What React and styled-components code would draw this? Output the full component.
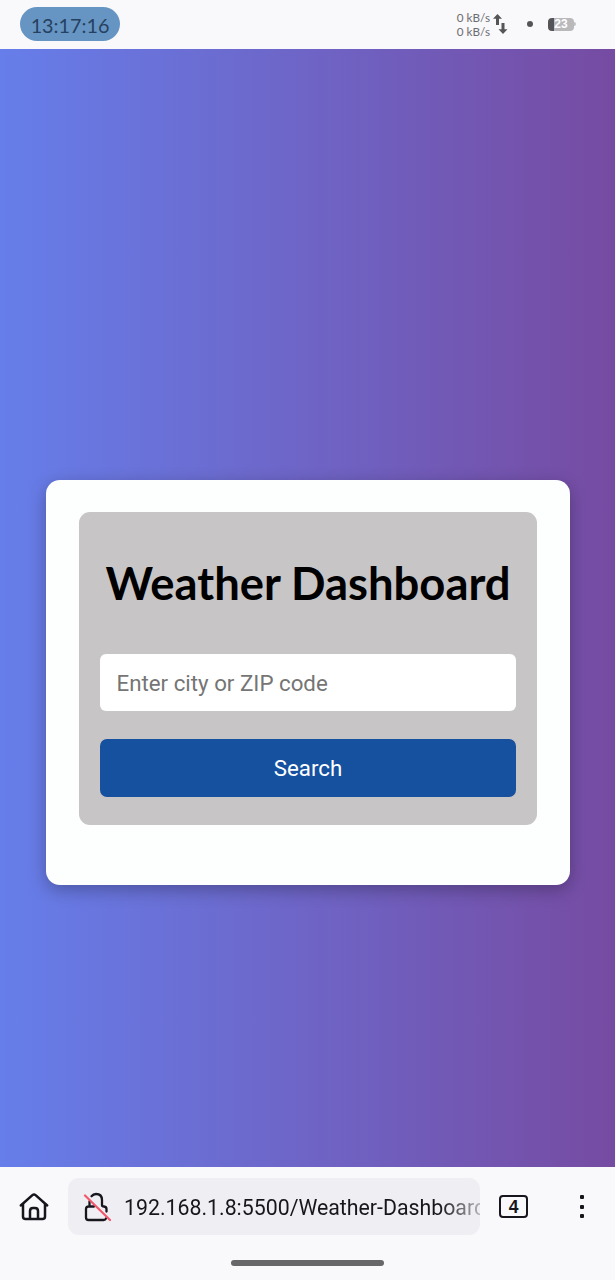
import React from 'react';
import styled, { createGlobalStyle } from 'styled-components';

const GlobalStyle = createGlobalStyle`
  * { box-sizing: border-box; }
  body { margin: 0; background: #f9f9fc; }
`;

const Phone = styled.div`
  width: 615px;
  height: 1280px;
  display: flex;
  flex-direction: column;
  overflow: hidden;
  background: #f9f9fc;
  font-family: Roboto, "Liberation Sans", sans-serif;
`;

const StatusBar = styled.header`
  height: 48px;
  margin-bottom: 1px;
  flex: none;
  display: flex;
  align-items: center;
  padding: 0 39px 0 20px;
  font-family: Lato, sans-serif;
`;

const Clock = styled.div`
  width: 100px;
  height: 34px;
  border-radius: 17px;
  background: #6695c3;
  color: #26415f;
  font-size: 19.8px;
  line-height: 37px;
  text-align: center;
  white-space: nowrap;
`;

const Speeds = styled.div`
  margin-left: auto;
  margin-right: 3px;
  color: #6c6c70;
  font-size: 11.7px;
  line-height: 14px;
  white-space: nowrap;
`;

const Dot = styled.span`
  width: 6px;
  height: 6px;
  border-radius: 50%;
  margin: 0 15px 0 19px;
  background: #555558;
`;

const Battery = styled.div`
  width: 26px;
  height: 13px;
  border-radius: 4px;
  background: linear-gradient(to right, #555558 6px, #b9b9bc 6px);
  color: #fff;
  font: bold 12px/13px "Liberation Sans", sans-serif;
  text-align: center;
`;

const BatteryTip = styled.span`
  width: 2px;
  height: 4px;
  border-radius: 0 2px 2px 0;
  background: #c2c2c5;
`;

const Page = styled.main`
  height: 1118px;
  flex: none;
  padding: 431px 45px 0 46px;
  background: linear-gradient(to right, #667eea, #764ba2);
`;

const Card = styled.section`
  height: 405px;
  padding: 32px 33px 60px;
  border-radius: 14px;
  background: #fdfefe;
  box-shadow: 0 5px 17px rgba(0, 0, 0, 0.28);
`;

const SearchPanel = styled.form`
  height: 313px;
  padding: 43px 21px 28px;
  display: flex;
  flex-direction: column;
  border-radius: 11px;
  background: #c8c5c6;
`;

const Title = styled.h1`
  margin: 0 0 43px;
  color: #000;
  font: bold 45.4px/56px Lato, sans-serif;
  text-align: center;
  white-space: nowrap;
`;

const CityInput = styled.input`
  width: 100%;
  height: 57px;
  flex: none;
  margin: 0 0 28px;
  padding: 0 16.5px;
  border: 0;
  border-radius: 6px;
  background: #fff;
  font: 22.3px Roboto, sans-serif;
  &::placeholder { color: #757575; opacity: 1; }
`;

const SearchButton = styled.button`
  width: 100%;
  height: 58px;
  flex: none;
  padding: 0 0 1px;
  border: 0;
  border-radius: 7px;
  background: #15519f;
  color: #fff;
  font: 22.3px Roboto, sans-serif;
`;

const BrowserBar = styled.nav`
  height: 79px;
  margin-bottom: 1px;
  flex: none;
  display: flex;
  align-items: center;
  padding: 0 20px 0 19px;
`;

const AddressBar = styled.div`
  width: 412px;
  height: 57px;
  margin: 0 19px 0 19px;
  padding-left: 15px;
  display: flex;
  align-items: center;
  border-radius: 11px;
  background: #efeff3;
  overflow: hidden;
`;

const Address = styled.span`
  flex: 1;
  min-width: 0;
  margin-left: 13px;
  overflow: hidden;
  color: #17161c;
  font-size: 21.3px;
  line-height: 30px;
  padding-top: 2px;
  white-space: nowrap;
  mask-image: linear-gradient(to right, #000 316px, rgba(0, 0, 0, 0.2) 360px);
`;

const TabCount = styled.div`
  width: 29px;
  height: 23px;
  border: 2.5px solid #17161c;
  border-radius: 4px;
  color: #17161c;
  font: bold 17.5px/20px "Liberation Sans", sans-serif;
  text-align: center;
`;

const Menu = styled.div`
  margin: 0 11px 0 auto;
  display: grid;
  gap: 5.5px;
`;

const MenuDot = styled.span`
  width: 4px;
  height: 4px;
  border-radius: 1px;
  background: #17161c;
`;

const GestureArea = styled.footer`
  flex: 1;
  display: flex;
  justify-content: center;
  padding-top: 13px;
`;

const GestureHandle = styled.span`
  width: 153px;
  height: 6px;
  border-radius: 3px;
  background: #67676a;
`;

const TransferIcon = () => (
  <svg width="15" height="22" viewBox="0 0 15 22" fill="#555558">
    <path d="M4.5 1 L9 5.7 H6 V12 H3 V5.7 H0 Z" />
    <path d="M8.5 10 H11.5 V16.3 H14.5 L10 21 L5.5 16.3 H8.5 Z" />
  </svg>
);

const HomeIcon = () => (
  <svg width="30" height="30" viewBox="0 0 30 30" fill="none" stroke="#17161c" strokeWidth="2.5" strokeLinecap="round" strokeLinejoin="round">
    <path d="M1.8 13.5 13.4 3.1Q15 1.8 16.6 3.1L28.2 13.5" />
    <path d="M4 12.2V24.5Q4 27 6.5 27H23.5Q26 27 26 24.5V12.2" />
    <path d="M11 26.5V19Q11 16 14 16H16Q19 16 19 19V26.5" />
  </svg>
);

const InsecureIcon = () => (
  <svg width="28" height="30" viewBox="0 0 28 30" fill="none" strokeLinecap="round" strokeLinejoin="round">
    <path d="M6.5 9.5V14.5M8.5 4.2C10 2.4 11.3 2 13 2C17 2 19 4.4 19 8V13Q19 14.5 21 14.5Q23.5 14.8 23.5 17V19.5M11 14.5H5.5Q3 14.5 3 17V25.5Q3 28 5.5 28H20.5Q22.5 28 23 26.5" stroke="#17161c" strokeWidth="2.3" />
    <path d="M2 3.5L27 28" stroke="#f2586c" strokeWidth="2.2" />
  </svg>
);

export default function App() {
  return (
    <Phone>
      <GlobalStyle />
      <StatusBar>
        <Clock>13:17:16</Clock>
        <Speeds>
          <div>0 kB/s</div>
          <div>0 kB/s</div>
        </Speeds>
        <TransferIcon />
        <Dot />
        <Battery>23</Battery>
        <BatteryTip />
      </StatusBar>
      <Page>
        <Card>
          <SearchPanel onSubmit={(event) => event.preventDefault()}>
            <Title>Weather Dashboard</Title>
            <CityInput placeholder="Enter city or ZIP code" />
            <SearchButton>Search</SearchButton>
          </SearchPanel>
        </Card>
      </Page>
      <BrowserBar>
        <HomeIcon />
        <AddressBar>
          <InsecureIcon />
          <Address>192.168.1.8:5500/Weather-Dashboard</Address>
        </AddressBar>
        <TabCount>4</TabCount>
        <Menu>
          <MenuDot />
          <MenuDot />
          <MenuDot />
        </Menu>
      </BrowserBar>
      <GestureArea>
        <GestureHandle />
      </GestureArea>
    </Phone>
  );
}
